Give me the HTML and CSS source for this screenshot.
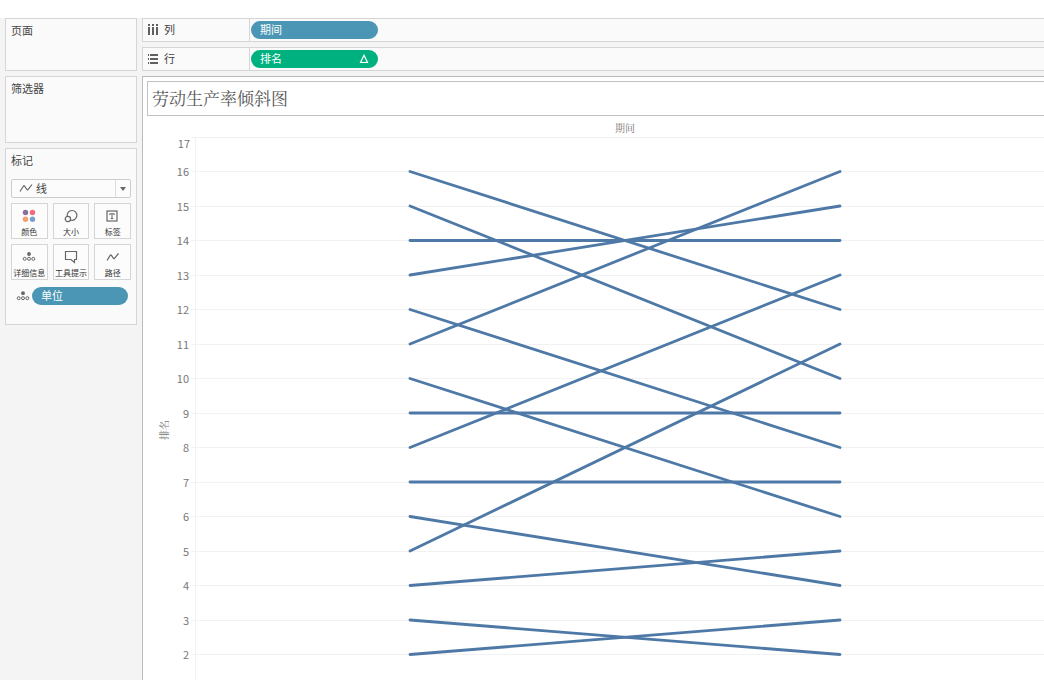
FILE: index.html
```html
<!DOCTYPE html>
<html lang="zh-CN">
<head>
<meta charset="utf-8">
<title>劳动生产率倾斜图</title>
<link rel="stylesheet" href="styles.css">
</head>
<body>
<div class="workspace">
  <aside class="sidebar">
    <section class="card pages"><h2 class="card-title">页面</h2></section>
    <section class="card filters"><h2 class="card-title">筛选器</h2></section>
    <section class="card marks">
      <h2 class="card-title">标记</h2>
      <div class="mark-type">
        <svg class="mark-type-icon" width="14" height="10" viewBox="0 0 14 10"><path class="stroke" d="M1 8.5 L4.5 3 Q5 2.4 5.5 3 L8 6.6 Q8.5 7.2 9 6.6 L13 1.5"/></svg>
        <select class="mark-select" aria-label="标记类型"><option>线</option></select>
        <span class="mark-arrow"></span>
      </div>
      <div class="mark-grid">
        <button class="mark-button" type="button">
          <svg width="16" height="16" viewBox="0 0 16 16"><circle cx="4.5" cy="4.5" r="2.7" fill="#8a6f9c"/><circle cx="11.5" cy="4.5" r="2.7" fill="#f56b7a"/><circle cx="4.5" cy="11.2" r="2.7" fill="#f5a06c"/><circle cx="11.5" cy="11.2" r="2.7" fill="#7b9fcc"/></svg>
          <span>颜色</span>
        </button>
        <button class="mark-button" type="button">
          <svg width="16" height="16" viewBox="0 0 16 16"><path class="stroke" d="M4.2 8.4 A4.9 4.9 0 1 1 7.3 12"/><circle class="stroke" cx="4.9" cy="11" r="2.7"/></svg>
          <span>大小</span>
        </button>
        <button class="mark-button" type="button">
          <svg width="16" height="16" viewBox="0 0 16 16"><rect class="stroke" x="2" y="3" width="10" height="10"/><path class="stroke thin" d="M4.8 7 V5.8 H9.2 V7 M7 5.8 V10.5 M5.8 10.5 H8.2"/></svg>
          <span>标签</span>
        </button>
        <button class="mark-button" type="button">
          <svg width="16" height="16" viewBox="0 0 16 16"><circle cx="8" cy="5" r="1.9" fill="#666"/><circle class="stroke thin" cx="3.7" cy="9.8" r="1.5"/><circle class="stroke thin" cx="8" cy="9.8" r="1.5"/><circle class="stroke thin" cx="12.3" cy="9.8" r="1.5"/></svg>
          <span>详细信息</span>
        </button>
        <button class="mark-button" type="button">
          <svg width="16" height="16" viewBox="0 0 16 16"><path class="stroke" d="M2.5 2.5 H13.5 V10.5 H11.5 V13.5 L8 10.5 H2.5 Z"/></svg>
          <span>工具提示</span>
        </button>
        <button class="mark-button" type="button">
          <svg width="16" height="16" viewBox="0 0 16 16"><path class="stroke" d="M2 11.5 L5.3 6.2 Q5.8 5.6 6.3 6.2 L8.5 9.4 Q9 10 9.5 9.4 L13.5 4.5"/></svg>
          <span>路径</span>
        </button>
      </div>
      <div class="detail-row">
        <svg width="16" height="16" viewBox="0 0 16 16"><circle cx="8" cy="5.2" r="1.9" fill="#666"/><circle class="stroke thin" cx="3.7" cy="10.2" r="1.5"/><circle class="stroke thin" cx="8" cy="10.2" r="1.5"/><circle class="stroke thin" cx="12.3" cy="10.2" r="1.5"/></svg>
        <button class="pill pill-blue pill-fill" type="button">单位</button>
      </div>
    </section>
  </aside>

  <main class="main">
    <div class="shelf">
      <div class="shelf-label">
        <svg width="12" height="12" viewBox="0 0 12 12" fill="#606060"><path d="M1 0h2v2H1zM5 0h2v2H5zM9 0h2v2H9zM1 3h2v8H1zM5 3h2v8H5zM9 3h2v8H9z"/></svg>
        <span>列</span>
      </div>
      <button class="pill pill-blue" type="button">期间</button>
    </div>
    <div class="shelf">
      <div class="shelf-label">
        <svg width="12" height="12" viewBox="0 0 12 12" fill="#606060"><path d="M1 1h1v2H1zM1 5h1v2H1zM1 9h1v2H1zM3 1h8v2H3zM3 5h8v2H3zM3 9h8v2H3z"/></svg>
        <span>行</span>
      </div>
      <button class="pill pill-green" type="button"><span>排名</span>
        <svg width="10" height="10" viewBox="0 0 10 10"><path d="M5 1.2 L8.5 8.5 H1.5 Z" fill="none" stroke="#fff" stroke-width="1.2"/></svg>
      </button>
    </div>

    <section class="view">
      <h1 class="view-title">劳动生产率倾斜图</h1>
      <div class="chart">
        <div class="chart-header">期间</div>
        <div class="chart-body">
          <svg class="axis" role="img" aria-label="排名">
            <text class="axis-title" transform="translate(25 293) rotate(-90)">排名</text>
            <g class="axis-labels">
              <text x="47" y="11">17</text><text x="46" y="39">16</text><text x="46" y="74">15</text><text x="46" y="108">14</text>
              <text x="46" y="143">13</text><text x="46" y="177">12</text><text x="46" y="212">11</text><text x="46" y="246">10</text>
              <text x="46" y="281">9</text><text x="46" y="315">8</text><text x="46" y="350">7</text><text x="46" y="384">6</text>
              <text x="46" y="419">5</text><text x="46" y="453">4</text><text x="46" y="488">3</text><text x="46" y="522">2</text>
            </g>
            <path class="grid" d="M48 .5h4M48 34.5h4M48 69.5h4M48 103.5h4M48 138.5h4M48 172.5h4M48 207.5h4M48 241.5h4M48 276.5h4M48 310.5h4M48 345.5h4M48 379.5h4M48 414.5h4M48 448.5h4M48 483.5h4M48 517.5h4"/>
          </svg>
          <svg class="plot" role="img" aria-label="劳动生产率倾斜图">
            <g class="grid">
              <line x1="0.5" x2="0.5" y1="0" y2="100%"/>
              <line x2="100%" y1="0.5" y2="0.5"/>
              <line x2="100%" y1="34.5" y2="34.5"/>
              <line x2="100%" y1="69.5" y2="69.5"/>
              <line x2="100%" y1="103.5" y2="103.5"/>
              <line x2="100%" y1="138.5" y2="138.5"/>
              <line x2="100%" y1="172.5" y2="172.5"/>
              <line x2="100%" y1="207.5" y2="207.5"/>
              <line x2="100%" y1="241.5" y2="241.5"/>
              <line x2="100%" y1="276.5" y2="276.5"/>
              <line x2="100%" y1="310.5" y2="310.5"/>
              <line x2="100%" y1="345.5" y2="345.5"/>
              <line x2="100%" y1="379.5" y2="379.5"/>
              <line x2="100%" y1="414.5" y2="414.5"/>
              <line x2="100%" y1="448.5" y2="448.5"/>
              <line x2="100%" y1="483.5" y2="483.5"/>
              <line x2="100%" y1="517.5" y2="517.5"/>
            </g>
            <g class="slopes">
              <line x1="25%" y1="34.5" x2="75%" y2="172.5"/>
              <line x1="25%" y1="69" x2="75%" y2="241.5"/>
              <line x1="25%" y1="103.5" x2="75%" y2="103.5"/>
              <line x1="25%" y1="138" x2="75%" y2="69"/>
              <line x1="25%" y1="172.5" x2="75%" y2="310.5"/>
              <line x1="25%" y1="207" x2="75%" y2="34.5"/>
              <line x1="25%" y1="241.5" x2="75%" y2="379.5"/>
              <line x1="25%" y1="276" x2="75%" y2="276"/>
              <line x1="25%" y1="310.5" x2="75%" y2="138"/>
              <line x1="25%" y1="345" x2="75%" y2="345"/>
              <line x1="25%" y1="379.5" x2="75%" y2="448.5"/>
              <line x1="25%" y1="414" x2="75%" y2="207"/>
              <line x1="25%" y1="448.5" x2="75%" y2="414"/>
              <line x1="25%" y1="483" x2="75%" y2="517.5"/>
              <line x1="25%" y1="517.5" x2="75%" y2="483"/>
            </g>
          </svg>
        </div>
      </div>
    </section>
  </main>
</div>
</body>
</html>
```

FILE: styles.css
```css
* { box-sizing: border-box; }
html, body { height: 100%; }
body {
  margin: 0;
  padding-top: 18px;
  overflow: hidden;
  background: #fff;
  color: #444;
  font: 11px/16px "Open Sans", "Noto Sans CJK SC", sans-serif;
}
button, select { font: inherit; color: inherit; margin: 0; }
h1, h2 { margin: 0; font-weight: 400; }
svg { display: block; flex: none; }
.stroke { fill: none; stroke: #666; stroke-width: 1.2; }
.thin { stroke-width: 1; }

.workspace {
  display: flex;
  gap: 5px;
  height: 100%;
  padding-left: 5px;
  background: #f4f4f4;
}
.sidebar {
  flex: none;
  width: 132px;
  display: flex;
  flex-direction: column;
  gap: 5px;
}
.card {
  padding: 4px 5px;
  border: 1px solid #d5d5d5;
  background: #fafafa;
}
.card-title { font-size: 11px; line-height: 16px; }
.pages { height: 53px; }
.filters { height: 67px; }
.marks { padding-bottom: 19px; }

.mark-type { position: relative; margin: 10px 0 5px; }
.mark-select {
  display: block;
  appearance: none;
  width: 100%;
  height: 19px;
  padding: 0 20px 0 24px;
  border: 1px solid #ccc;
  border-radius: 2px;
  background: #fcfcfc;
  line-height: 16px;
}
.mark-type-icon { position: absolute; left: 8px; top: 4px; }
.mark-arrow {
  position: absolute;
  right: 1px;
  top: 1px;
  width: 15px;
  height: 17px;
  border-left: 1px solid #ddd;
  pointer-events: none;
}
.mark-arrow::after {
  content: "";
  position: absolute;
  left: 4px;
  top: 7px;
  border: 3px solid transparent;
  border-top: 4px solid #666;
  border-bottom: 0;
}
.mark-grid {
  display: grid;
  grid-template-columns: repeat(3, 1fr);
  gap: 5px;
}
.mark-button {
  display: flex;
  flex-direction: column;
  align-items: center;
  justify-content: space-between;
  height: 36px;
  padding: 4px 0 0;
  border: 1px solid #d5d5d5;
  background: #fcfcfc;
  color: #333;
  font-size: 8px;
  line-height: 12px;
  white-space: nowrap;
}
.detail-row {
  display: flex;
  align-items: center;
  gap: 1px;
  padding: 7px 3px 0 4px;
}

.pill {
  display: flex;
  align-items: center;
  justify-content: space-between;
  width: 127px;
  height: 18px;
  padding: 0 9px;
  border: 0;
  border-radius: 9px;
  color: #fff;
  font-size: 11px;
  line-height: 16px;
}
.pill-fill { flex: 1; width: auto; }
.pill-blue { background: #4a96b4; }
.pill-green { background: #00b180; }

.main {
  flex: 1;
  min-width: 0;
  display: flex;
  flex-direction: column;
  gap: 5px;
}
.shelf {
  display: flex;
  flex: none;
  align-items: center;
  gap: 1px;
  height: 24px;
  border: 1px solid #d5d5d5;
  border-right: 0;
  background: #fafafa;
}
.shelf-label {
  display: flex;
  align-items: center;
  gap: 5px;
  width: 107px;
  height: 100%;
  padding-left: 4px;
  border-right: 1px solid #d5d5d5;
}

.view {
  flex: 1;
  min-height: 0;
  display: flex;
  flex-direction: column;
  padding: 4px 0 0;
  overflow: hidden;
  border: 1px solid #bbb;
  border-width: 1px 0 0 1px;
  background: #fff;
}
.view-title {
  flex: none;
  margin-left: 4px;
  padding: 4px 4px 5px;
  border: 1px solid #c2c2c2;
  border-right: 0;
  color: #555;
  font: 400 17px/24px "Noto Serif CJK SC", "Noto Sans CJK SC", sans-serif;
}
.chart {
  flex: 1;
  display: flex;
  flex-direction: column;
  min-height: 0;
  margin-right: -11px;
  color: #777;
  font: 10px/16px "Noto Serif CJK SC", "Noto Sans CJK SC", sans-serif;
}
.chart-header {
  margin-left: 52px;
  padding: 4px 0 1px;
  text-align: center;
}
.chart-body { flex: 1; display: flex; min-height: 0; }
.axis { width: 52px; height: 100%; overflow: hidden; }
.axis-labels {
  fill: #777;
  font-family: "Noto Sans CJK SC", sans-serif;
  font-size: 11px;
  text-anchor: end;
}
.axis-title { font-size: 10px; text-anchor: middle; fill: #777; }
.plot { flex: 1; min-width: 0; height: 100%; }
.grid { stroke: #f2f2f2; stroke-width: 1; }
.slopes { stroke: #4e79a7; stroke-width: 2.8; stroke-linecap: round; }
```
